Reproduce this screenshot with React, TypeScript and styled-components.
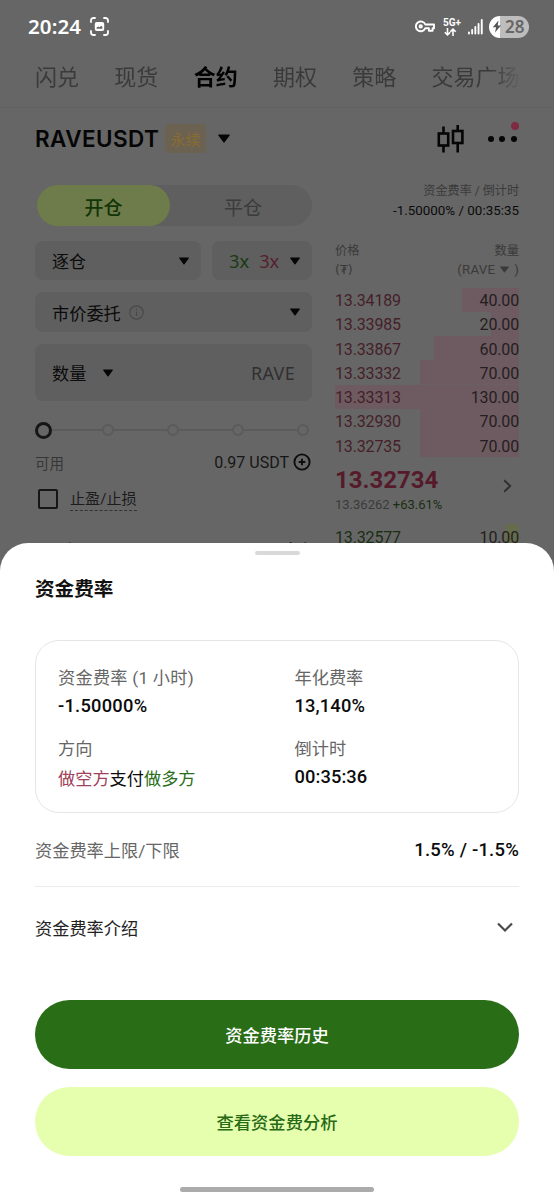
import React from "react";
import styled, { createGlobalStyle, css } from "styled-components";

const GlobalStyle = createGlobalStyle`
  *, *::before, *::after { box-sizing: border-box; }
  html, body { margin: 0; padding: 0; background: #666; }
  body { font-family: Roboto, "Noto Sans CJK SC", sans-serif; color: #0b0b0b; }
`;

const Screen = styled.main`
  position: relative;
  width: 554px;
  height: 1200px;
  overflow: hidden;
  background: #666666;
  white-space: nowrap;
`;

const Label = styled.span<{
  $size?: number;
  $color?: string;
  $weight?: number;
  $track?: number;
  $font?: string;
}>`
  font-size: ${(p) => p.$size ?? 16}px;
  color: ${(p) => p.$color ?? "#0b0b0b"};
  font-weight: ${(p) => p.$weight ?? 400};
  letter-spacing: ${(p) => p.$track ?? 0}px;
  ${(p) => p.$font && css`font-family: "${p.$font}", "Noto Sans CJK SC", sans-serif;`}
`;

/* ---------- status bar ---------- */

const StatusBar = styled.header`
  display: flex;
  align-items: center;
  height: 53px;
  padding: 0 25px 0 28px;
  color: #fff;
`;

const Clock = styled.time`
  margin-top: -2px;
  font-family: "Noto Sans", sans-serif;
  font-size: 20.5px;
  font-weight: 600;
  width: 54px;
  letter-spacing: 0.1px;
`;

const StatusIcons = styled.div`
  display: flex;
  align-items: center;
  margin-left: auto;
`;

const Network = styled.div`
  display: flex;
  flex-direction: column;
  align-items: flex-start;
  width: 20px;
  margin: 0 5px 0 8px;
  font-size: 10px;
  font-weight: 700;
  line-height: 9px;
  svg { margin: 1px 0 0 1px; }
`;

const Battery = styled.div`
  display: flex;
  align-items: center;
  width: 40px;
  height: 22px;
  margin-left: 6px;
  padding-left: 3px;
  border-radius: 11px;
  background: linear-gradient(90deg, #fff 0 11px, #bdbdbd 11px);
  color: #666;
  font-family: "Noto Sans", sans-serif;
  font-size: 17px;
  font-weight: 600;
  gap: 3px;
`;

/* ---------- top tabs ---------- */

const Tabs = styled.nav`
  display: flex;
  align-items: center;
  gap: 35.3px;
  height: 54px;
  margin-right: 35px;
  padding: 0 0 11px 35px;
  overflow: hidden;
  mask-image: linear-gradient(90deg, #000 0 490px, transparent 522px);
`;

const Tab = styled.span<{ $active?: boolean }>`
  flex: none;
  font-size: 22px;
  color: ${(p) => (p.$active ? "#000" : "#3a3a3a")};
  font-weight: ${(p) => (p.$active ? 700 : 400)};
`;

const TabLine = styled.hr`
  height: 1px;
  margin: 0;
  border: 0;
  background: #616161;
`;

/* ---------- pair header ---------- */

const PairHeader = styled.section`
  display: flex;
  align-items: center;
  height: 61px;
  padding: 0 37px 0 35px;
`;

const PairName = styled.h1`
  margin: 0;
  width: 130px;
  font-family: Inter, sans-serif;
  font-size: 22.5px;
  font-weight: 600;
  letter-spacing: 0.4px;
  color: #050505;
`;

const PerpTag = styled.span`
  display: grid;
  place-items: center;
  width: 41px;
  height: 29px;
  margin-right: 12px;
  border-radius: 4px;
  background: #6c6252;
  color: #8a6c30;
  font-size: 15px;
`;

const PairActions = styled.div`
  display: flex;
  align-items: center;
  gap: 24px;
  margin-left: auto;
`;

const MoreButton = styled.div`
  position: relative;
  display: flex;
  gap: 5.6px;
  i { width: 6px; height: 6px; border-radius: 50%; background: #050505; }
`;

const AlertDot = styled.b`
  position: absolute;
  top: -14px;
  right: -2px;
  width: 8px;
  height: 8px;
  border-radius: 50%;
  background: #7e2a40;
`;

/* ---------- trading area ---------- */

const Trade = styled.section`
  display: flex;
  justify-content: space-between;
  padding: 16px 35px 0;
`;

const Form = styled.div`
  width: 277px;
  display: flex;
  flex-direction: column;
`;

const Segmented = styled.div`
  display: flex;
  height: 41px;
  margin-left: 2px;
  margin-bottom: 15px;
  border-radius: 21px;
  background: #5f5f5f;
`;

const Segment = styled.span<{ $active?: boolean }>`
  flex: none;
  display: grid;
  place-items: center;
  width: ${(p) => (p.$active ? 133 : 142)}px;
  border-radius: 21px;
  padding: ${(p) => (p.$active ? "1px 0 0" : "1px 0 0 4px")};
  font-size: 19px;
  background: ${(p) => (p.$active ? "#6d7c4a" : "transparent")};
  color: ${(p) => (p.$active ? "#133407" : "#3b3b3b")};
  font-weight: ${(p) => (p.$active ? 500 : 400)};
`;

const FieldRow = styled.div`
  display: flex;
  gap: 11px;
  margin-bottom: 12px;
`;

const Field = styled.div<{ $h?: number; $w?: number }>`
  display: flex;
  align-items: center;
  flex: ${(p) => (p.$w ? "none" : 1)};
  width: ${(p) => (p.$w ? p.$w + "px" : "auto")};
  height: ${(p) => p.$h ?? 40}px;
  padding: 0 12px 0 17px;
  border-radius: 8px;
  background: #5f5f5f;
`;

const Leverages = styled.span`
  display: inline-flex;
  gap: 10px;
`;

const Push = styled.span`
  margin-left: auto;
  display: inline-flex;
  align-items: center;
`;

const Slider = styled.div`
  display: flex;
  align-items: center;
  height: 20px;
  margin-top: 7px;
`;

const Thumb = styled.span`
  width: 17px;
  height: 17px;
  border: 3px solid #161616;
  border-radius: 50%;
`;

const Track = styled.span<{ $len: number }>`
  width: ${(p) => p.$len}px;
  height: 2px;
  background: #5b5b5b;
`;

const Stop = styled.span`
  width: 12px;
  height: 12px;
  border: 2px solid #5b5b5b;
  border-radius: 50%;
`;

const FormLine = styled.div<{ $top: number }>`
  display: flex;
  align-items: center;
  height: 22px;
  margin-top: ${(p) => p.$top}px;
`;

const CheckBox = styled.span`
  width: 20px;
  height: 20px;
  margin: 0 12px 0 3px;
  border: 2px solid #161616;
  border-radius: 2px;
`;

const Dashed = styled.span`
  padding-top: 1px;
  font-size: 15.1px;
  line-height: 22px;
  color: #1c1c1c;
  border-bottom: 1px dashed #333;
`;

/* ---------- order book ---------- */

const Book = styled.div`
  width: 184px;
  display: flex;
  flex-direction: column;
`;

const FundingInfo = styled.div`
  display: flex;
  flex-direction: column;
  align-items: flex-end;
  line-height: 19px;
  margin-top: -3px;
`;

const BookHead = styled.div`
  display: flex;
  justify-content: space-between;
  margin-top: 23px;
  font-size: 12.3px;
  line-height: 17.5px;
  color: #3a3a3a;
`;

const HeadCell = styled.div<{ $end?: boolean }>`
  display: flex;
  flex-direction: column;
  align-items: ${(p) => (p.$end ? "flex-end" : "flex-start")};
`;

const HeadUnit = styled.span`
  display: inline-flex;
  align-items: center;
  gap: 5px;
  font-size: 13.3px;
  letter-spacing: 0.2px;
`;

const Levels = styled.div`
  margin-top: 9.5px;
`;

const Level = styled.div<{ $depth: number; $side: "ask" | "bid" }>`
  display: flex;
  justify-content: space-between;
  align-items: center;
  height: 24.25px;
  padding-top: 2px;
  font-size: 16px;
  letter-spacing: -0.15px;
  color: ${(p) => (p.$side === "ask" ? "#451f29" : "#1a2e14")};
  background: linear-gradient(${(p) => (p.$side === "ask" ? "#6e5b61, #6e5b61" : "#646c4b, #646c4b")})
    right / ${(p) => p.$depth}px 100% no-repeat;
`;

const Amount = styled.span`
  color: #241e20;
`;

const LastPrice = styled.div`
  display: flex;
  align-items: flex-start;
  height: 67px;
  padding: 8px 7px 0 0;
`;

const LastStack = styled.div`
  display: flex;
  flex-direction: column;
  line-height: 20px;
  gap: 4px;
  padding-top: 5px;
`;

const LastArrow = styled(Push)`
  margin-top: 14px;
`;

/* ---------- bottom sheet ---------- */

const Sheet = styled.section`
  position: absolute;
  left: 0;
  right: 0;
  bottom: 0;
  height: 657px;
  padding: 8px 35px 0;
  display: flex;
  flex-direction: column;
  border-radius: 28px 28px 0 0;
  background: #fff;
`;

const Grip = styled.span`
  align-self: center;
  width: 45px;
  height: 4px;
  border-radius: 2px;
  background: #d9d9d9;
`;

const SheetTitle = styled.h2`
  margin: 20px 0 0;
  height: 30px;
  line-height: 30px;
  font-size: 19.6px;
  font-weight: 700;
  color: #111;
`;

const Card = styled.div`
  display: grid;
  grid-template-columns: 236.5px 1fr;
  align-content: start;
  row-gap: 15px;
  height: 173px;
  margin-top: 35px;
  padding: 23px 22px 0;
  border: 1px solid #e6e6e6;
  border-radius: 24px;
`;

const Fact = styled.div`
  display: flex;
  flex-direction: column;
  line-height: 28px;
  height: 56px;
`;

const Direction = styled.span`
  padding-top: 2px;
`;

const SheetRow = styled.div<{ $line?: boolean; $h: number }>`
  display: flex;
  justify-content: space-between;
  align-items: center;
  height: ${(p) => p.$h}px;
  border-bottom: ${(p) => (p.$line ? "1px solid #ececec" : "0")};
`;

const IntroRow = styled(SheetRow)`
  padding: 0 6px 32px 0;
`;

const PillButton = styled.button<{ $primary?: boolean }>`
  flex: none;
  height: 69px;
  margin: 0 0 17.5px;
  padding: 0;
  border: 0;
  border-radius: 35px;
  font: 500 17.3px Roboto, "Noto Sans CJK SC", sans-serif;
  color: ${(p) => (p.$primary ? "#fff" : "#286a16")};
  background: ${(p) => (p.$primary ? "#296d17" : "#e5ffae")};
`;

const HomeBar = styled.span`
  align-self: center;
  width: 194px;
  height: 5px;
  margin-top: 14px;
  border-radius: 3px;
  background: #ababab;
`;

/* ---------- icons ---------- */

const Caret = ({ w = 12, h = 9, color = "#050505" }) => (
  <svg width={w} height={h} viewBox="0 0 12 9">
    <path d="M1 .4h10c.7 0 1 .6.6 1.1L6.6 8.3a.8.8 0 0 1-1.2 0L.4 1.5C0 1 .3.4 1 .4z" fill={color} />
  </svg>
);

const CaptureIcon = () => (
  <svg width="19" height="19" viewBox="0 0 19 19" fill="none">
    <path d="M1 5V3.500A2.500 2.500 0 0 1 3.500 1H5M14 1h1.500A2.500 2.500 0 0 1 18 3.500V5M18 14v1.500a2.500 2.500 0 0 1-2.500 2.500H14M5 18H3.500A2.500 2.500 0 0 1 1 15.500V14" stroke="#fff" strokeWidth="1.8" strokeLinecap="round" />
    <rect x="4.800" y="5" width="9.400" height="9" rx="2" fill="#fff" />
    <path d="M6.600 11.800V10.600l1.700-1 1.300.6 1.500-1.500 1.300 1.400v1.700z" fill="#666" />
  </svg>
);

const KeyIcon = () => (
  <svg width="20" height="13" viewBox="0 0 20 13" fill="none" stroke="#fff" strokeWidth="1.9" strokeLinejoin="round">
    <path d="M10.300 4.500H19v3.700h-1.400v2.600h-3.700V8.200h-3.600A4.900 4.900 0 1 1 10.300 4.500z" />
    <circle cx="5.700" cy="6.400" r="1.200" />
  </svg>
);

const DataArrows = () => (
  <svg width="13" height="8" viewBox="0 0 13 8" fill="none" stroke="#fff" strokeWidth="1.6">
    <path d="M3.500 0v7M.8 4.200l2.700 2.700L6.200 4.200M9 8V1M6.300 3.800 9 1.100l2.700 2.700" />
  </svg>
);

const SignalIcon = () => (
  <svg width="15" height="16" viewBox="0 0 15 16" fill="#fff">
    <rect x="0" y="12.500" width="1.900" height="3" rx=".9" />
    <rect x="3.200" y="10" width="1.900" height="5.500" rx=".9" />
    <rect x="6.400" y="7" width="1.900" height="8.500" rx=".9" />
    <rect x="9.600" y="4" width="1.900" height="11.500" rx=".9" />
    <rect x="12.800" y="0" width="1.900" height="15.500" rx=".9" />
  </svg>
);

const BoltIcon = () => (
  <svg width="10" height="13" viewBox="0 0 10 13">
    <path d="M6.500.5.8 7.300h3.300L3 12.500 9 5.500H5.700z" fill="#555" />
  </svg>
);

const CandleIcon = () => (
  <svg width="27" height="28" viewBox="0 0 27 28" fill="none" stroke="#050505" strokeWidth="2.600">
    <path d="M6.500 1.500v7M6.500 21v6.500M20.700 0v6M20.700 18v9.500" />
    <rect x="1.800" y="8.500" width="9.400" height="12" />
    <rect x="16" y="6" width="9.400" height="12" />
  </svg>
);

const InfoIcon = () => (
  <svg width="15" height="15" viewBox="0 0 15 15" fill="none" stroke="#494949" strokeWidth="1.200">
    <circle cx="7.500" cy="7.500" r="6.700" />
    <path d="M7.500 6.500v4.500M7.500 3.800v1.300" />
  </svg>
);

const PlusCircle = () => (
  <svg width="19" height="18" viewBox="0 0 19 18" fill="none" stroke="#0c0c0c" strokeWidth="1.900">
    <circle cx="9" cy="9" r="7.600" />
    <path d="M9 5.700v6.600M5.700 9h6.600" />
  </svg>
);

const Chevron = ({ right = false }: { right?: boolean }) =>
  right ? (
    <svg width="9" height="14" viewBox="0 0 9 14" fill="none" stroke="#303030" strokeWidth="1.900">
      <path d="M1.200 1.200 7.200 7l-6 5.800" />
    </svg>
  ) : (
    <svg width="16" height="11" viewBox="0 0 16 11" fill="none" stroke="#4a4a4a" strokeWidth="2.200">
      <path d="M1 1.500l7 7 7-7" />
    </svg>
  );

/* ---------- data ---------- */

const tabs = ["闪兑", "现货", "合约", "期权", "策略", "交易广场"];

const asks = [
  { price: "13.34189", amount: "40.00", depth: 57 },
  { price: "13.33985", amount: "20.00", depth: 28 },
  { price: "13.33867", amount: "60.00", depth: 85 },
  { price: "13.33332", amount: "70.00", depth: 99 },
  { price: "13.33313", amount: "130.00", depth: 184 },
  { price: "13.32930", amount: "70.00", depth: 99 },
  { price: "13.32735", amount: "70.00", depth: 99 },
];

export default function App() {
  return (
    <Screen>
      <GlobalStyle />
      <StatusBar>
        <Clock>20:24</Clock>
        <Label $size={16}>&nbsp;&nbsp;</Label>
        <CaptureIcon />
        <StatusIcons>
          <KeyIcon />
          <Network>5G+<DataArrows /></Network>
          <SignalIcon />
          <Battery><BoltIcon />28</Battery>
        </StatusIcons>
      </StatusBar>

      <Tabs>
        {tabs.map((t) => <Tab key={t} $active={t === "合约"}>{t}</Tab>)}
      </Tabs>
      <TabLine />

      <PairHeader>
        <PairName>RAVEUSDT</PairName>
        <PerpTag>永续</PerpTag>
        <Caret />
        <PairActions>
          <CandleIcon />
          <MoreButton><i /><i /><i /><AlertDot /></MoreButton>
        </PairActions>
      </PairHeader>

      <Trade>
        <Form>
          <Segmented>
            <Segment $active>开仓</Segment>
            <Segment>平仓</Segment>
          </Segmented>
          <FieldRow>
            <Field $h={39}>
              <Label $size={17}>逐仓</Label>
              <Push><Caret w={10} h={8} /></Push>
            </Field>
            <Field $h={39} $w={100}>
              <Leverages>
                <Label $size={18.3} $color="#1a3a12" $font="Noto Sans">3x</Label>
                <Label $size={18.3} $color="#561f2e" $font="Noto Sans">3x</Label>
              </Leverages>
              <Push><Caret w={10} h={8} /></Push>
            </Field>
          </FieldRow>
          <FieldRow>
            <Field>
              <Label $size={17.2}>市价委托</Label>
              <Label>&nbsp;&nbsp;</Label>
              <InfoIcon />
              <Push><Caret w={10} h={8} /></Push>
            </Field>
          </FieldRow>
          <FieldRow>
            <Field $h={57}>
              <Label $size={17.2}>数量</Label>
              <Label $size={17}>&nbsp;&nbsp;&nbsp;&nbsp;</Label>
              <Caret w={10} h={8} />
              <Push><Label $size={18} $color="#303030" $font="Noto Sans" $track={0.3}>RAVE&nbsp;</Label></Push>
            </Field>
          </FieldRow>
          <Slider>
            <Thumb /><Track $len={50} /><Stop /><Track $len={53} /><Stop /><Track $len={53} /><Stop /><Track $len={53} /><Stop />
          </Slider>
          <FormLine $top={11}>
            <Label $size={14.5} $color="#363636">可用</Label>
            <Push>
              <Label $size={16} $color="#161616">0.97 USDT&nbsp;</Label>
              <PlusCircle />
            </Push>
          </FormLine>
          <FormLine $top={15}>
            <CheckBox />
            <Dashed>止盈/止损</Dashed>
          </FormLine>
          <FormLine $top={27}>
            <Label $size={14} $color="#363636">可开多</Label>
            <Push><Label $size={14}>0 多仓</Label></Push>
          </FormLine>
        </Form>

        <Book>
          <FundingInfo>
            <Label $size={12.1} $color="#3a3a3a">资金费率 / 倒计时</Label>
            <Label $size={13.4}>-1.50000% / 00:35:35</Label>
          </FundingInfo>
          <BookHead>
            <HeadCell>
              <span>价格</span>
              <Label $size={12.5} $color="#3a3a3a" $font="DejaVu Sans">(₮)</Label>
            </HeadCell>
            <HeadCell $end>
              <span>数量</span>
              <HeadUnit>(RAVE <Caret w={9} h={7} color="#3a3a3a" /> )</HeadUnit>
            </HeadCell>
          </BookHead>
          <Levels>
            {asks.map((l) => (
              <Level key={l.price} $depth={l.depth} $side="ask">
                <span>{l.price}</span>
                <Amount>{l.amount}</Amount>
              </Level>
            ))}
          </Levels>
          <LastPrice>
            <LastStack>
              <Label $size={24} $weight={700} $color="#561b2b">13.32734</Label>
              <span>
                <Label $size={13} $color="#3a3a3a">13.36262 </Label>
                <Label $size={13} $color="#1a2e14">+63.61%</Label>
              </span>
            </LastStack>
            <LastArrow><Chevron right /></LastArrow>
          </LastPrice>
          <Level $depth={14} $side="bid">
            <span>13.32577</span>
            <Amount>10.00</Amount>
          </Level>
        </Book>
      </Trade>

      <Sheet>
        <Grip />
        <SheetTitle>资金费率</SheetTitle>
        <Card>
          <Fact>
            <Label $size={17.2} $color="#666" $track={0.25}>资金费率 (1 小时)</Label>
            <Label $size={18.3} $weight={500} $track={0.25}>-1.50000%</Label>
          </Fact>
          <Fact>
            <Label $size={17.2} $color="#666">年化费率</Label>
            <Label $size={18.3} $weight={500} $track={0.15}>13,140%</Label>
          </Fact>
          <Fact>
            <Label $size={17.2} $color="#666">方向</Label>
            <Direction>
              <Label $size={17.2} $color="#a0415b">做空方</Label>
              <Label $size={17.2}>支付</Label>
              <Label $size={17.2} $color="#2b6f1a">做多方</Label>
            </Direction>
          </Fact>
          <Fact>
            <Label $size={17.2} $color="#666">倒计时</Label>
            <Label $size={18.3} $weight={500} $track={0.1}>00:35:36</Label>
          </Fact>
        </Card>
        <SheetRow $h={74} $line>
          <Label $size={17.2} $color="#666">资金费率上限/下限</Label>
          <Label $size={18.5} $weight={500} $track={0.2}>1.5% / -1.5%</Label>
        </SheetRow>
        <IntroRow $h={113}>
          <Label $size={17.2} $color="#222">资金费率介绍</Label>
          <Chevron />
        </IntroRow>
        <PillButton $primary>资金费率历史</PillButton>
        <PillButton>查看资金费分析</PillButton>
        <HomeBar />
      </Sheet>
    </Screen>
  );
}
